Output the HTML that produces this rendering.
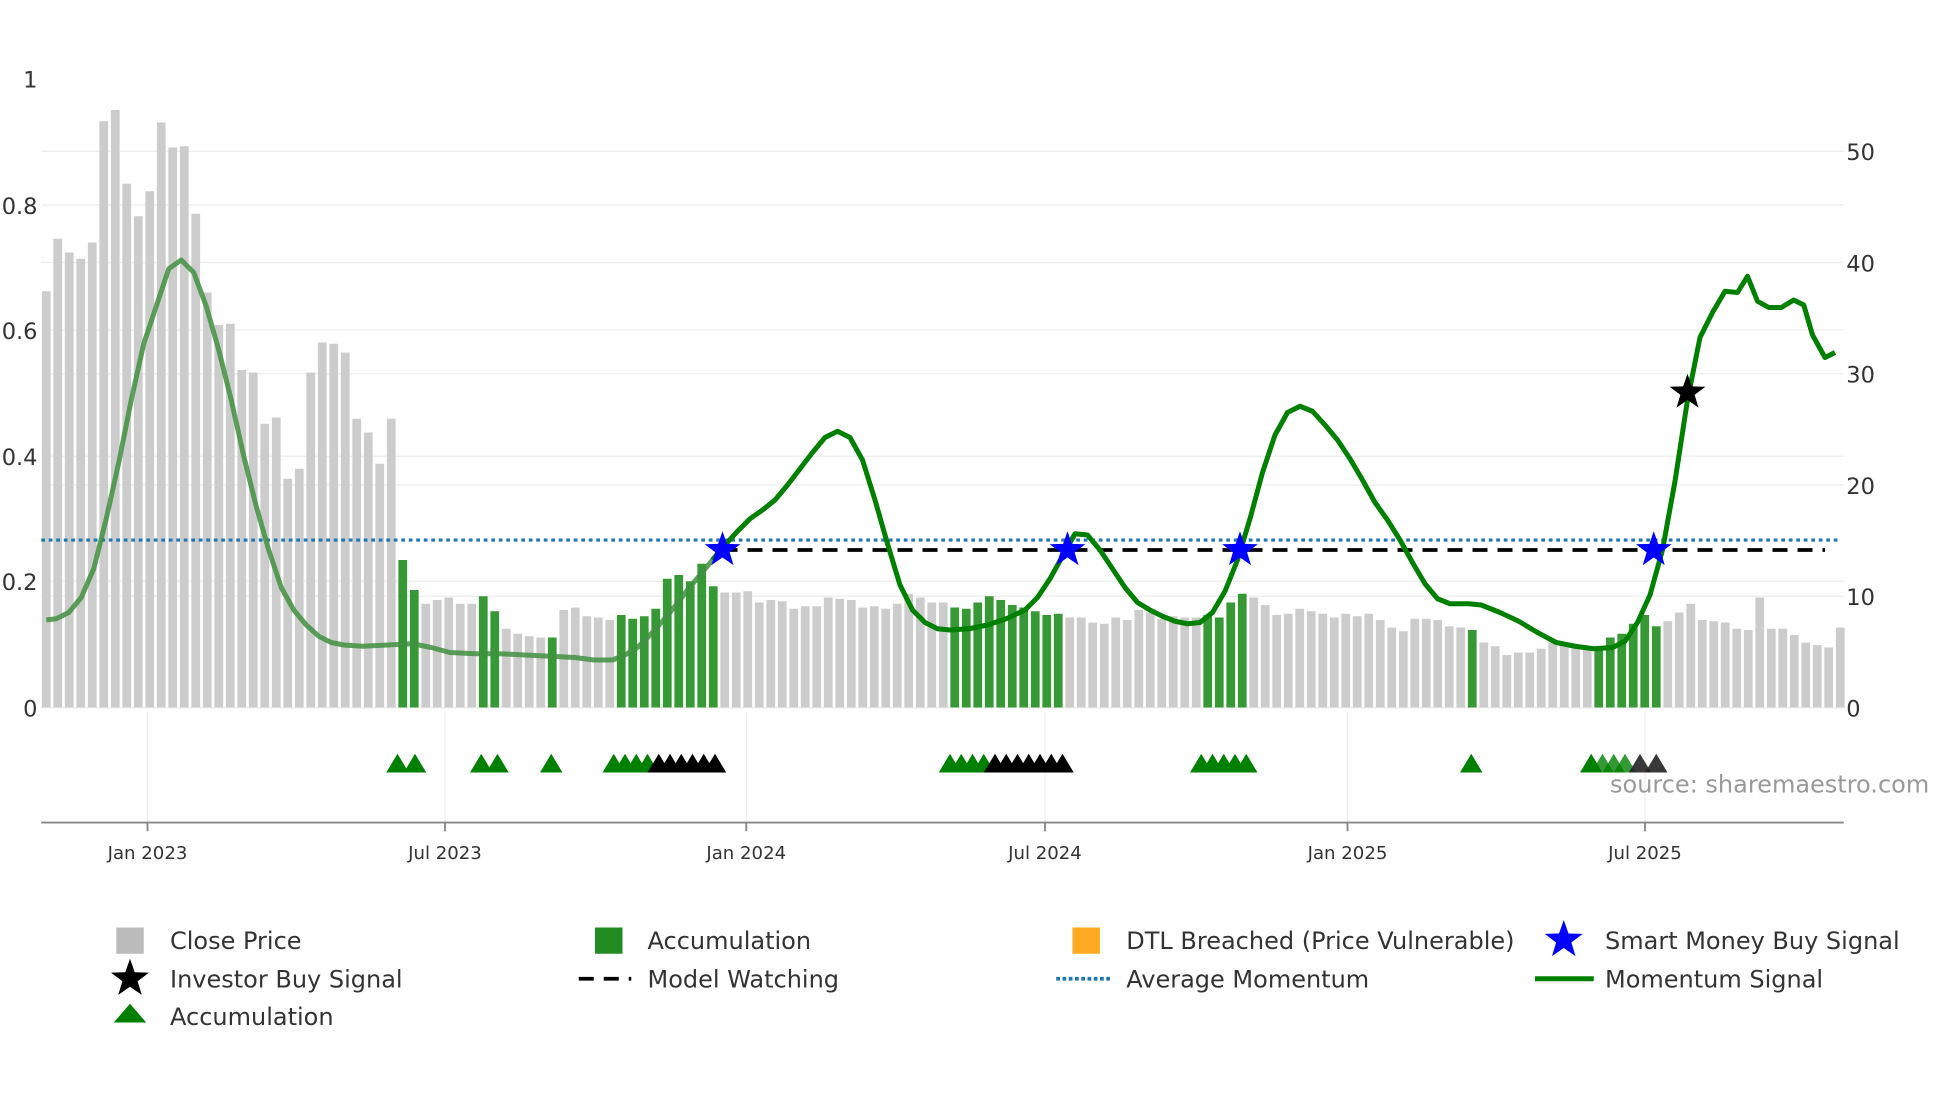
<!DOCTYPE html>
<html><head><meta charset="utf-8"><style>
html,body{margin:0;padding:0;background:#fff;}
svg{display:block;}
text{font-family:"DejaVu Sans","Liberation Sans",sans-serif;}
</style></head><body>
<svg id="s" width="1960" height="1102" viewBox="0 0 1568 881.6" preserveAspectRatio="none" xmlns="http://www.w3.org/2000/svg">
<rect width="1568" height="881.6" fill="#fff"/>
<g stroke="#ececec" stroke-width="1">
<line x1="33" x2="1475" y1="121" y2="121"/><line x1="33" x2="1475" y1="164" y2="164"/>
<line x1="33" x2="1475" y1="210" y2="210"/><line x1="33" x2="1475" y1="264" y2="264"/>
<line x1="33" x2="1475" y1="299" y2="299"/><line x1="33" x2="1475" y1="365" y2="365"/>
<line x1="33" x2="1475" y1="388" y2="388"/><line x1="33" x2="1475" y1="465" y2="465"/>
<line x1="33" x2="1475" y1="477" y2="477"/><line x1="33" x2="1475" y1="566" y2="566"/>
<line x1="118" x2="118" y1="570" y2="658"/><line x1="356" x2="356" y1="570" y2="658"/>
<line x1="597" x2="597" y1="570" y2="658"/><line x1="836" x2="836" y1="570" y2="658"/>
<line x1="1078" x2="1078" y1="570" y2="658"/><line x1="1316" x2="1316" y1="570" y2="658"/>
</g>
<g id="bars"></g>
<line x1="33" x2="1472" y1="432" y2="432" stroke="#1f77b4" stroke-width="2.5" stroke-dasharray="3,3"/>
<line x1="578" x2="1460" y1="440" y2="440" stroke="#000" stroke-width="3" stroke-dasharray="12,8"/>
<path id="l1" fill="none" stroke="#3f8f3f" stroke-width="4" stroke-linejoin="round" opacity="0.85"/>
<path id="l2" fill="none" stroke="#008000" stroke-width="4" stroke-linejoin="round"/>
<g id="stars"></g>
<g id="tris"></g>
<line x1="33" x2="1475" y1="658" y2="658" stroke="#888" stroke-width="1.5"/>
<g stroke="#888" stroke-width="1.5">
<line x1="118" x2="118" y1="658" y2="665"/><line x1="356" x2="356" y1="658" y2="665"/>
<line x1="597" x2="597" y1="658" y2="665"/><line x1="836" x2="836" y1="658" y2="665"/>
<line x1="1078" x2="1078" y1="658" y2="665"/><line x1="1316" x2="1316" y1="658" y2="665"/>
</g>
<g font-size="14.5" fill="#333" text-anchor="middle">
<text x="118" y="687">Jan 2023</text><text x="356" y="687">Jul 2023</text>
<text x="597" y="687">Jan 2024</text><text x="836" y="687">Jul 2024</text>
<text x="1078" y="687">Jan 2025</text><text x="1316" y="687">Jul 2025</text>
</g>
<g font-size="18" fill="#333" text-anchor="end">
<text x="30" y="70">1</text><text x="30" y="171">0.8</text><text x="30" y="271">0.6</text>
<text x="30" y="372">0.4</text><text x="30" y="472">0.2</text><text x="30" y="573">0</text>
</g>
<g font-size="18" fill="#333" text-anchor="start">
<text x="1477" y="128">50</text><text x="1477" y="217">40</text><text x="1477" y="306">30</text>
<text x="1477" y="395">20</text><text x="1477" y="484">10</text><text x="1477" y="573">0</text>
</g>
<text x="1288" y="634" font-size="19.2" fill="#999">source: sharemaestro.com</text>
<g font-size="19.2" fill="#333">
<rect x="93" y="742" width="22" height="21" fill="#bbb"/><text x="136" y="759">Close Price</text>
<rect x="476" y="742" width="22" height="21" fill="#228b22"/><text x="518" y="759">Accumulation</text>
<rect x="858" y="742" width="22" height="21" fill="#ffaa22"/><text x="901" y="759">DTL Breached (Price Vulnerable)</text>
<text x="1284" y="759">Smart Money Buy Signal</text>
<text x="136" y="790">Investor Buy Signal</text>
<line x1="463" x2="505" y1="783" y2="783" stroke="#000" stroke-width="3" stroke-dasharray="12,8"/><text x="518" y="790">Model Watching</text>
<line x1="845" x2="888" y1="783" y2="783" stroke="#1f77b4" stroke-width="3" stroke-dasharray="3,2"/><text x="901" y="790">Average Momentum</text>
<line x1="1228" x2="1275" y1="783" y2="783" stroke="#008000" stroke-width="4"/><text x="1284" y="790">Momentum Signal</text>
<polygon points="104,803 91,818 117,818" fill="#008000"/><text x="136" y="820">Accumulation</text>
</g>
<g id="lstars"></g>
</svg>
<script>
var tops=[233,191,202,207,194,97,88,147,173,153,98,118,117,171,234,260,259,296,298,339,334,383,375,298,274,275,282,335,346,371,335,
448,472,483,480,478,483,483,477,489,503,507,509,510,510,488,486,493,494,496,492,495,493,487,463,460,465,451,469,
474,474,473,482,480,481,487,485,485,478,479,480,486,485,487,483,475,478,482,482,
486,487,482,477,480,484,486,489,492,491,494,494,498,499,494,496,488,490,495,493,494,494,
492,494,482,475,478,484,492,491,487,489,491,494,491,493,491,496,502,505,495,495,496,501,502,
504,514,517,524,522,522,519,514,516,518,518,518,510,507,499,492,501,497,490,483,496,497,498,503,504,478,503,503,508,514,516,518,502];
var greens={};[31,32,38,39,44,50,51,52,53,54,55,56,57,58,79,80,81,82,83,84,85,86,87,88,101,102,103,104,124,135,136,137,138,139,140].forEach(function(i){greens[i]=1;});
var h="";
for(var i=0;i<tops.length;i++){var x=37+i*9.2;h+='<rect x="'+(x-3.5).toFixed(1)+'" y="'+tops[i]+'" width="7" height="'+(566-tops[i])+'" fill="'+(greens[i]?'#369936':'#cccccc')+'"/>';}
document.getElementById('bars').innerHTML=h;
var pts=[[37,496],[45,495],[55,490],[65,478],[75,455],[85,415],[95,370],[105,320],[115,275],[125,245],[135,215],[145,208],[155,218],[165,245],[175,280],[185,320],[195,365],[205,405],[215,440],[225,470],[235,488],[245,500],[255,509],[265,514],[275,516],[290,517],[310,516],[330,515],[345,518],[360,522],[380,523],[400,523],[420,524],[440,525],[460,526],[475,528],[490,528],[500,524],[510,518],[520,508],[530,497],[540,485],[550,472],[560,460],[570,448],[580,436],
[590,425],[600,415],[610,408],[620,400],[630,388],[640,375],[650,362],[660,350],[670,345],[680,350],[690,368],[700,400],[710,435],[720,468],[730,488],[740,498],[750,503],[760,504],[775,503],[790,500],[805,495],[820,488],[830,478],[840,463],[850,445],[860,427],[870,428],[880,440],[890,455],[900,470],[910,482],[920,488],[930,493],[940,497],[950,499],[960,498],[970,490],[980,473],[990,448],[1000,415],[1010,378],[1020,348],[1030,330],[1040,325],[1050,329],[1060,340],[1070,352],[1080,367],[1090,384],[1100,402],[1110,416],[1120,432],[1130,450],[1140,467],[1150,479],[1160,483],[1175,483],[1185,484],[1200,490],[1215,497],[1230,506],[1245,514],[1260,517],[1275,519],[1290,518],[1300,513],[1310,498],[1320,476],[1330,440],[1340,385],[1350,320],[1360,270],[1370,250],[1380,233],[1390,234],[1398,221],[1406,241],[1415,246],[1425,246],[1435,240],[1443,244],[1450,268],[1460,286],[1468,282]];
var a=[],b=[];pts.forEach(function(p){if(p[0]<=580)a.push(p);if(p[0]>=570)b.push(p);});
function d(arr){return 'M'+arr.map(function(p){return p[0]+','+p[1];}).join('L');}
document.getElementById('l1').setAttribute('d',d(a));document.getElementById('l2').setAttribute('d',d(b));
function star(cx,cy,R,c){var s='';for(var k=0;k<10;k++){var r=k%2?R*0.4:R,an=-Math.PI/2+k*Math.PI/5;s+=(cx+r*Math.cos(an)).toFixed(1)+','+(cy+r*Math.sin(an)).toFixed(1)+' ';}return '<polygon points="'+s+'" fill="'+c+'"/>';}
var st=star(578,440,15,'#0000ff')+star(854,440,15,'#0000ff')+star(992,440,15,'#0000ff')+star(1323,440,15,'#0000ff')+star(1350,314,15,'#000');
document.getElementById('stars').innerHTML=st;
document.getElementById('lstars').innerHTML=star(1251,752,16,'#0000ff')+star(104,783,16,'#000');
var g=[318,332,385,398,441,491,500,509,518,760,769,778,787,961,970,979,988,997,1177,1273,1282,1291,1300];
var k=[527,536,545,554,563,572,796,805,814,823,832,841,850];
var t='';function tri(x,c,o){return '<polygon points="'+x+',603 '+(x-9)+',618 '+(x+9)+',618" fill="'+c+'" opacity="'+(o||1)+'"/>';}
g.forEach(function(x){t+=tri(x,'#008000',x>1280?0.8:1);});k.forEach(function(x){t+=tri(x,'#000');});
t+=tri(1312,'#222',0.9)+tri(1325,'#222',0.9);
document.getElementById('tris').innerHTML=t;
</script>
</body></html>
